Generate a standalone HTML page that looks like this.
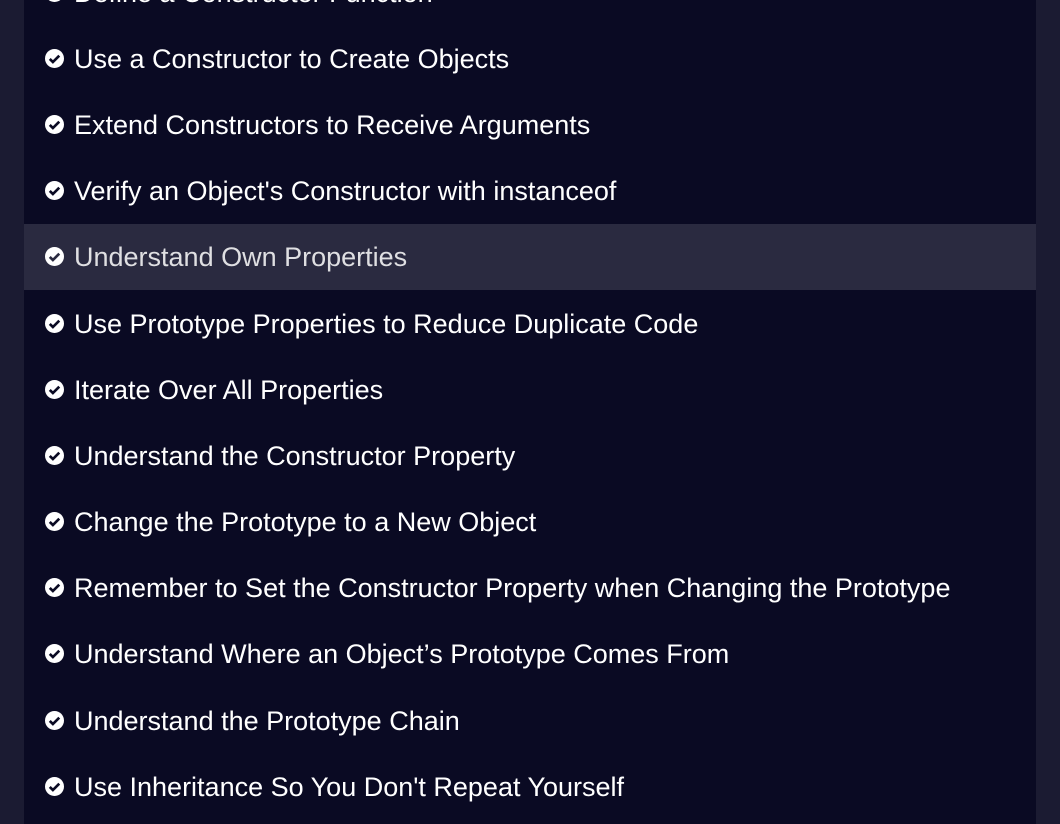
<!DOCTYPE html>
<html><head><style>
html,body{margin:0;width:1060px;height:824px;overflow:hidden;}
body{background:#1b1b32;font-family:"Liberation Sans",sans-serif;position:relative;}
.list{position:absolute;left:24px;width:1012px;top:-41px;height:865px;background:#0a0a23;}
.row{height:66.2px;box-sizing:border-box;padding-top:2px;display:flex;align-items:center;color:#fff;font-size:27px;white-space:nowrap;}
.row.h{background:#2a2a40;color:#dfdfe2;}
.row svg{margin-left:21px;margin-right:10px;flex:none;position:relative;top:-1px}
</style></head><body>
<div class="list">
<div class="row"><svg width="19" height="19" viewBox="0 0 20 20"><circle cx="10" cy="10" r="10" fill="#fff"/><path d="M5 10.5l3.3 3.2L15 7" stroke="#0a0a23" stroke-width="2.8" fill="none"/></svg>Define a Constructor Function</div>
<div class="row"><svg width="19" height="19" viewBox="0 0 20 20"><circle cx="10" cy="10" r="10" fill="#fff"/><path d="M5 10.5l3.3 3.2L15 7" stroke="#0a0a23" stroke-width="2.8" fill="none"/></svg>Use a Constructor to Create Objects</div>
<div class="row"><svg width="19" height="19" viewBox="0 0 20 20"><circle cx="10" cy="10" r="10" fill="#fff"/><path d="M5 10.5l3.3 3.2L15 7" stroke="#0a0a23" stroke-width="2.8" fill="none"/></svg>Extend Constructors to Receive Arguments</div>
<div class="row"><svg width="19" height="19" viewBox="0 0 20 20"><circle cx="10" cy="10" r="10" fill="#fff"/><path d="M5 10.5l3.3 3.2L15 7" stroke="#0a0a23" stroke-width="2.8" fill="none"/></svg>Verify an Object's Constructor with instanceof</div>
<div class="row h"><svg width="19" height="19" viewBox="0 0 20 20"><circle cx="10" cy="10" r="10" fill="#fff"/><path d="M5 10.5l3.3 3.2L15 7" stroke="#2a2a40" stroke-width="2.8" fill="none"/></svg>Understand Own Properties</div>
<div class="row"><svg width="19" height="19" viewBox="0 0 20 20"><circle cx="10" cy="10" r="10" fill="#fff"/><path d="M5 10.5l3.3 3.2L15 7" stroke="#0a0a23" stroke-width="2.8" fill="none"/></svg>Use Prototype Properties to Reduce Duplicate Code</div>
<div class="row"><svg width="19" height="19" viewBox="0 0 20 20"><circle cx="10" cy="10" r="10" fill="#fff"/><path d="M5 10.5l3.3 3.2L15 7" stroke="#0a0a23" stroke-width="2.8" fill="none"/></svg>Iterate Over All Properties</div>
<div class="row"><svg width="19" height="19" viewBox="0 0 20 20"><circle cx="10" cy="10" r="10" fill="#fff"/><path d="M5 10.5l3.3 3.2L15 7" stroke="#0a0a23" stroke-width="2.8" fill="none"/></svg>Understand the Constructor Property</div>
<div class="row"><svg width="19" height="19" viewBox="0 0 20 20"><circle cx="10" cy="10" r="10" fill="#fff"/><path d="M5 10.5l3.3 3.2L15 7" stroke="#0a0a23" stroke-width="2.8" fill="none"/></svg>Change the Prototype to a New Object</div>
<div class="row"><svg width="19" height="19" viewBox="0 0 20 20"><circle cx="10" cy="10" r="10" fill="#fff"/><path d="M5 10.5l3.3 3.2L15 7" stroke="#0a0a23" stroke-width="2.8" fill="none"/></svg>Remember to Set the Constructor Property when Changing the Prototype</div>
<div class="row"><svg width="19" height="19" viewBox="0 0 20 20"><circle cx="10" cy="10" r="10" fill="#fff"/><path d="M5 10.5l3.3 3.2L15 7" stroke="#0a0a23" stroke-width="2.8" fill="none"/></svg>Understand Where an Object’s Prototype Comes From</div>
<div class="row"><svg width="19" height="19" viewBox="0 0 20 20"><circle cx="10" cy="10" r="10" fill="#fff"/><path d="M5 10.5l3.3 3.2L15 7" stroke="#0a0a23" stroke-width="2.8" fill="none"/></svg>Understand the Prototype Chain</div>
<div class="row"><svg width="19" height="19" viewBox="0 0 20 20"><circle cx="10" cy="10" r="10" fill="#fff"/><path d="M5 10.5l3.3 3.2L15 7" stroke="#0a0a23" stroke-width="2.8" fill="none"/></svg>Use Inheritance So You Don't Repeat Yourself</div>
</div>
</body></html>
